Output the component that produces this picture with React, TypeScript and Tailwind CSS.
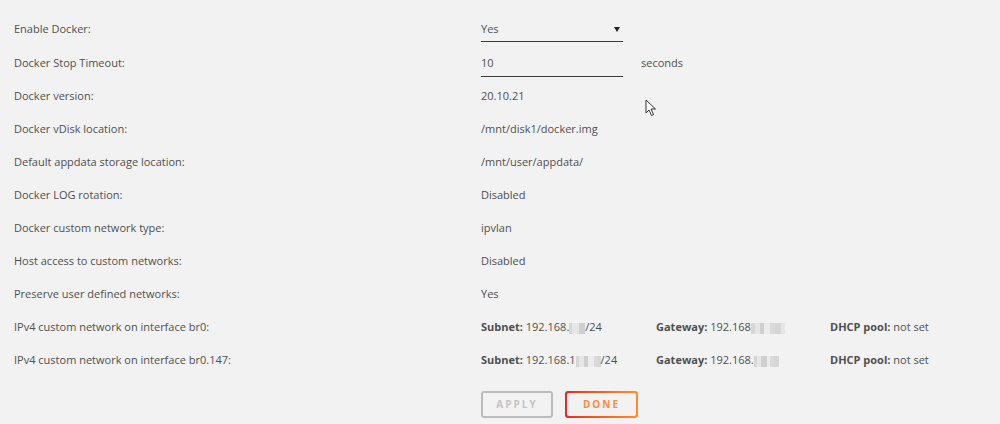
import type { ReactNode } from 'react';

const font = { fontFamily: '"Open Sans", "Liberation Sans", sans-serif' };

function Blur({ w }: { w: number[] }) {
  // pixelated redaction blocks
  const shades = ['bg-[#d6d6d6]', 'bg-[#e6e6e6]', 'bg-[#cfcfcf]', 'bg-[#ececec]', 'bg-[#dadada]'];
  return (
    <span className="inline-flex h-[11px] items-stretch align-middle">
      {w.map((width, i) => (
        <span key={i} className={shades[i % shades.length]} style={{ width }} />
      ))}
    </span>
  );
}

function Row({ label, tall, children }: { label: string; tall?: boolean; children: ReactNode }) {
  return (
    <div className={`flex items-center ${tall ? 'h-[34px]' : 'h-[33px]'}`}>
      <div className="w-[467px] shrink-0">{label}</div>
      <div className="flex items-center">{children}</div>
    </div>
  );
}

function Network({ subnet, gateway }: { subnet: ReactNode; gateway: ReactNode }) {
  return (
    <div className="flex items-center">
      <div className="w-[175px]">
        <span className="font-bold">Subnet:</span> {subnet}
      </div>
      <div className="w-[174px]">
        <span className="font-bold">Gateway:</span> {gateway}
      </div>
      <div>
        <span className="font-bold">DHCP pool:</span> not set
      </div>
    </div>
  );
}

export default function App() {
  return (
    <div className="relative h-[424px] w-[1000px] overflow-hidden bg-[#f2f2f2] text-[11px] text-[#505050]" style={font}>
      <div className="px-[14px] pt-[12px]">
        <Row label="Enable Docker:" tall>
          <div className="flex h-[26px] w-[142px] items-center justify-between border-b border-[#3a3a3a] pt-[1px] pr-[3px]">
            <span>Yes</span>
            <svg width="6" height="5" viewBox="0 0 6 5" className="mt-[1px]">
              <path d="M0 0 L6 0 L3 5 Z" fill="#222" />
            </svg>
          </div>
        </Row>
        <Row label="Docker Stop Timeout:" tall>
          <div className="flex h-[27px] w-[142px] items-center border-b border-[#3a3a3a] pt-[2px]">10</div>
          <span className="ml-[18px]">seconds</span>
        </Row>
        <Row label="Docker version:">20.10.21</Row>
        <Row label="Docker vDisk location:">/mnt/disk1/docker.img</Row>
        <Row label="Default appdata storage location:">/mnt/user/appdata/</Row>
        <Row label="Docker LOG rotation:">Disabled</Row>
        <Row label="Docker custom network type:">ipvlan</Row>
        <Row label="Host access to custom networks:">Disabled</Row>
        <Row label="Preserve user defined networks:">Yes</Row>
        <Row label="IPv4 custom network on interface br0:">
          <Network
            subnet={
              <>
                192.168.<Blur w={[3, 7, 6]} />/24
              </>
            }
            gateway={
              <>
                192.168<Blur w={[4, 5, 4, 6, 5, 6, 4]} />
              </>
            }
          />
        </Row>
        <Row label="IPv4 custom network on interface br0.147:">
          <Network
            subnet={
              <>
                192.168.1<Blur w={[3, 5, 4, 6, 4, 3]} />/24
              </>
            }
            gateway={
              <>
                192.168.<Blur w={[3, 4, 6, 3, 4, 5]} />
              </>
            }
          />
        </Row>

        <div className="mt-[14px] flex gap-[12px] pl-[467px]">
          <button className="flex h-[27px] w-[72px] items-center justify-center rounded-[3px] border-2 border-[#bcbcbc] text-[10px] font-bold tracking-[0.2em] text-[#c4c4c4]">
            APPLY
          </button>
          <div className="h-[27px] w-[73px] rounded-[3px] bg-gradient-to-r from-[#e22828] to-[#ff8c2f] p-[2px]">
            <button className="flex h-full w-full items-center justify-center rounded-[2px] bg-[#f2f2f2] text-[10px] font-bold tracking-[0.2em] text-[#fb8a3c]">
              DONE
            </button>
          </div>
        </div>
      </div>

      <svg className="absolute left-[645px] top-[99px]" width="12" height="18" viewBox="0 0 12 18">
        <path d="M1 1 L1 14 L4 11 L6.5 16.5 L8.5 15.5 L6 10 L10.5 10 Z" fill="#fff" stroke="#333" strokeWidth="1" strokeLinejoin="round" />
      </svg>
    </div>
  );
}
